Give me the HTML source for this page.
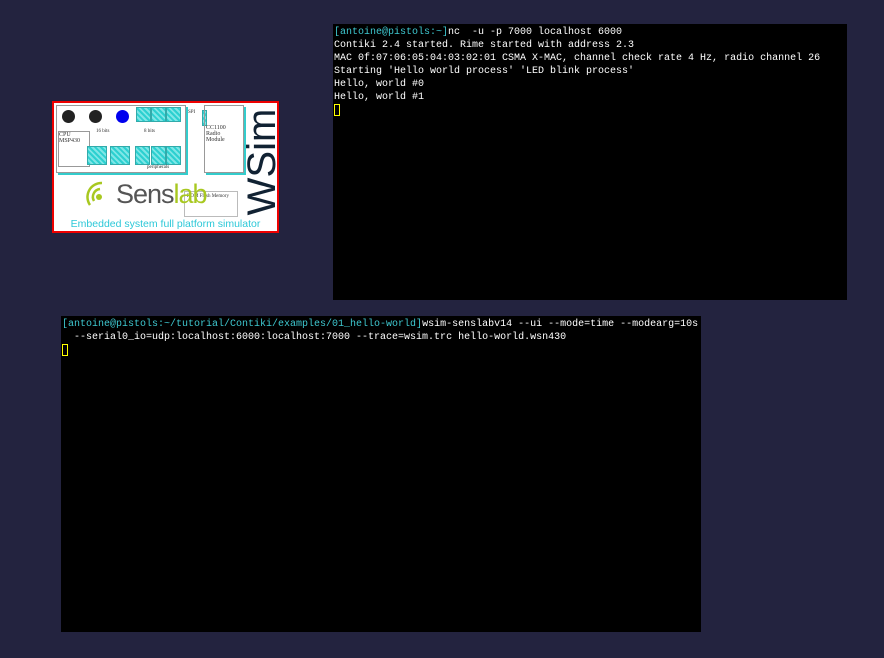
<!DOCTYPE html>
<html><head><meta charset="utf-8"><style>
html,body{margin:0;padding:0}
body{width:884px;height:658px;background:#23233f;position:relative;overflow:hidden;font-family:"Liberation Mono","DejaVu Sans Mono",monospace}
.term{position:absolute;background:#000;color:#fff;font-size:10px;line-height:13px;white-space:pre;overflow:hidden;box-sizing:border-box;padding:2px 0 0 1px}
.c{color:#3ec8d0}
.cur{display:inline-block;width:4px;height:10px;border:1px solid #ff0;vertical-align:-2px}
#logo{position:absolute;left:52px;top:101px;width:223px;height:128px;background:#fff;border:2px solid #e00;overflow:hidden;font-family:"Liberation Serif",serif}
.h{position:absolute;background:repeating-linear-gradient(45deg,#2cd0d0 0 2px,#7ee6e6 2px 4px);border:1px solid #3aa}
.dot{position:absolute;width:13px;height:13px;border-radius:50%;top:7px;background:#222}
.sm{position:absolute;font-size:5px;color:#333}
</style></head><body>
<div class="term" style="left:333px;top:24px;width:514px;height:276px"><span class="c">[antoine@pistols:~]</span>nc  -u -p 7000 localhost 6000
Contiki 2.4 started. Rime started with address 2.3
MAC 0f:07:06:05:04:03:02:01 CSMA X-MAC, channel check rate 4 Hz, radio channel 26
Starting 'Hello world process' 'LED blink process'
Hello, world #0
Hello, world #1
<span class="cur"></span></div>
<div class="term" style="left:61px;top:316px;width:640px;height:316px"><span class="c">[antoine@pistols:~/tutorial/Contiki/examples/01_hello-world]</span>wsim-senslabv14 --ui --mode=time --modearg=10s
  --serial0_io=udp:localhost:6000:localhost:7000 --trace=wsim.trc hello-world.wsn430
<span class="cur"></span></div>
<div id="logo">
 <div style="position:absolute;left:2px;top:2px;width:128px;height:66px;border:1px solid #999;box-shadow:2px 2px 0 #3cc"></div>
 <div style="position:absolute;left:4px;top:28px;width:30px;height:34px;border:1px solid #999"></div>
 <div class="sm" style="left:5px;top:29px;font-size:6px">CPU<br>MSP430</div>
 <div class="dot" style="left:8px"></div><div class="dot" style="left:35px"></div><div class="dot" style="left:62px;background:#00e"></div>
 <div class="h" style="left:82px;top:4px;width:13px;height:13px"></div>
 <div class="h" style="left:97px;top:4px;width:13px;height:13px"></div>
 <div class="h" style="left:112px;top:4px;width:13px;height:13px"></div>
 <div class="h" style="left:33px;top:43px;width:18px;height:17px"></div>
 <div class="h" style="left:56px;top:43px;width:18px;height:17px"></div>
 <div class="h" style="left:81px;top:43px;width:13px;height:17px"></div>
 <div class="h" style="left:97px;top:43px;width:13px;height:17px"></div>
 <div class="h" style="left:112px;top:43px;width:13px;height:17px"></div>
 <div class="sm" style="left:42px;top:26px">16 bits</div>
 <div class="sm" style="left:90px;top:26px">8 bits</div>
 <div class="sm" style="left:93px;top:62px">peripherals</div>
 <div class="h" style="left:148px;top:7px;width:3px;height:14px"></div>
 <div style="position:absolute;left:150px;top:2px;width:38px;height:66px;border:1px solid #999;box-shadow:2px 2px 0 #3cc"></div>
 <div class="sm" style="left:152px;top:22px;font-size:6px">CC1100<br>Radio<br>Module</div>
 <div class="sm" style="left:134px;top:7px">SPI</div>
 <div style="position:absolute;left:130px;top:88px;width:52px;height:24px;border:1px solid #bbb"></div>
 <div class="sm" style="left:133px;top:91px">ROM Flash Memory</div>
 <svg style="position:absolute;left:26px;top:74px" width="36" height="36" viewBox="0 0 36 36"><g fill="none" stroke="#a8c820" stroke-width="2.5"><path d="M22 6 A14 14 0 0 0 10 28"/><path d="M20 12 A8 8 0 0 0 14 24"/></g><circle cx="19" cy="20" r="3" fill="#a8c820"/></svg>
 <div style="position:absolute;left:62px;top:76px;font-family:'Liberation Sans',sans-serif;font-size:27px;letter-spacing:-1px;color:#555">Sens<span style="color:#a8c820">lab</span></div>
 <div style="position:absolute;left:194px;top:2px;width:28px;height:112px;overflow:visible">
  <div style="position:absolute;left:-42px;top:42px;width:112px;text-align:center;transform:rotate(-90deg);font-family:'Liberation Sans',sans-serif;font-size:40px;color:#123;line-height:30px">WSim</div>
 </div>
 <div style="position:absolute;left:0;top:115px;width:223px;text-align:center;font-family:'Liberation Sans',sans-serif;font-size:10.5px;color:#2cc8d8">Embedded system full platform simulator</div>
</div>
</body></html>
